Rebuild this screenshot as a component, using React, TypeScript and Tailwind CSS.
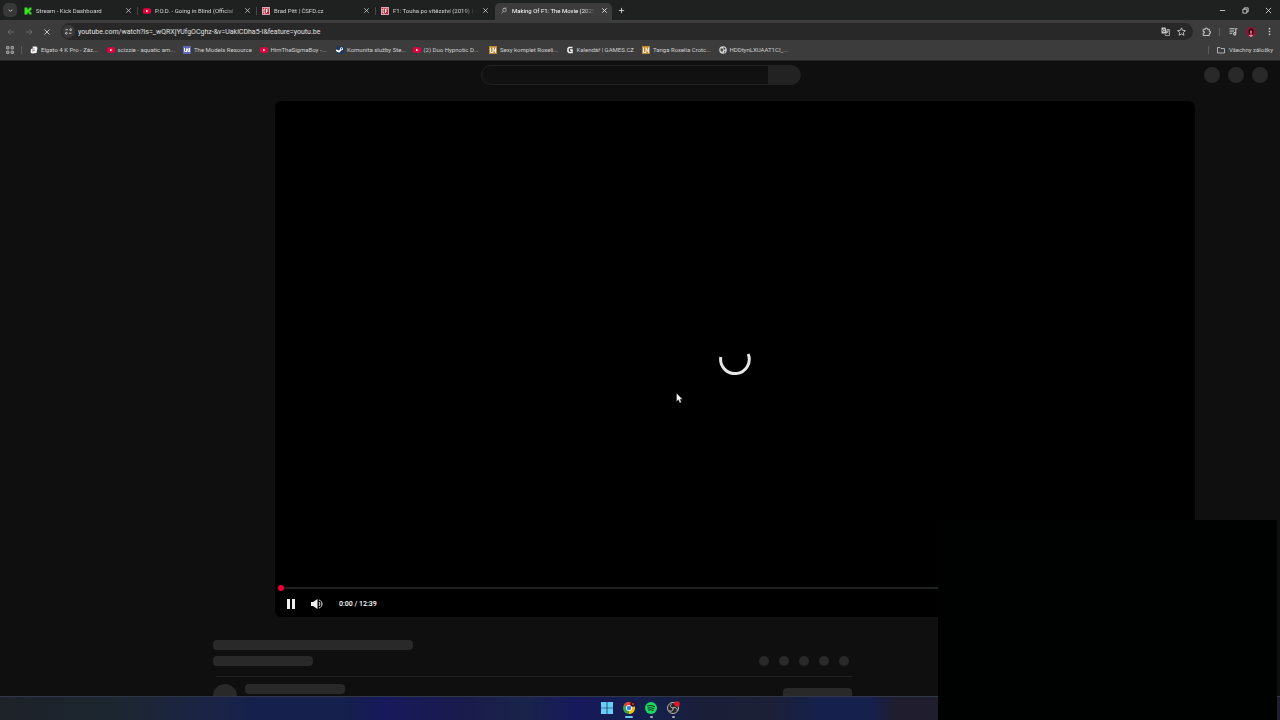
import React from "react";

const tabs = [
  { icon: "kick", title: "Stream - Kick Dashboard" },
  { icon: "yt", title: "P.O.D. - Going in Blind (Official" },
  { icon: "csfd", title: "Brad Pitt | ČSFD.cz" },
  { icon: "csfd", title: "F1: Touha po vítězství (2019) | Č" },
  { icon: "load", title: "Making Of F1: The Movie (2025" },
];

const bookmarks = [
  { icon: "elgato", title: "Elgato 4 K Pro - Záz..." },
  { icon: "yt", title: "scizzie - aquatic am..." },
  { icon: "models", title: "The Models Resource" },
  { icon: "yt", title: "HimTheSigmaBoy -..." },
  { icon: "steam", title: "Komunita služby Ste..." },
  { icon: "yt", title: "(2) Duo Hypnotic D..." },
  { icon: "ln", title: "Sexy komplet Roxeli..." },
  { icon: "games", title: "Kalendář | GAMES.CZ" },
  { icon: "ln", title: "Tanga Roxelia Crotc..." },
  { icon: "globe", title: "HDDtynLXUAAT1CI_..." },
];

function SiteIcon({ name }: { name: string }) {
  return (
    <svg viewBox="0 0 16 16" className="size-2 shrink-0" aria-hidden="true">
      {name === "kick" && <path fill="#35e61c" d="M1 1h6v4h2V3h2V1h4v5h-2v2h-2v1h2v2h2v4h-4v-2H9v-2H7v4H1z" />}
      {name === "yt" && (
        <>
          <rect y="2.5" width="16" height="11" rx="3" fill="#e5003c" />
          <path fill="#fff" d="M6.3 5.5v5L10.8 8z" />
        </>
      )}
      {name === "csfd" && (
        <>
          <rect width="16" height="16" rx="2" fill="#e9d5d8" />
          <rect x="1.5" y="1.5" width="13" height="13" rx="1" fill="#ba2435" />
          <path fill="none" stroke="#fff" strokeWidth="1.8" d="M7 4H4v8h3M9 12V4h4M9 8h3" />
        </>
      )}
      {name === "load" && (
        <g fill="none" stroke="#b8b8b8" strokeWidth="1.5">
          <circle cx="9" cy="6" r="3.5" />
          <path d="M6.5 8.5 3 13M6 3l7-1" />
        </g>
      )}
      {name === "elgato" && (
        <>
          <path fill="#f2f2f2" d="M5 1h8l2 3-2 10-9 1-3-2 1-7 4-1z" />
          <path fill="none" stroke="#555" strokeWidth="1" d="M6 12c-2-4 1-8 4-6M6 9h4" />
        </>
      )}
      {name === "models" && (
        <>
          <rect width="16" height="16" fill="#6067b5" />
          <path fill="none" stroke="#fff" strokeWidth="2" d="M3 4v7h4V5m0 6 3-6v6h3V4" />
        </>
      )}
      {name === "steam" && (
        <>
          <circle cx="8" cy="8" r="8" fill="#17395f" />
          <path fill="none" stroke="#fff" strokeWidth="3.4" strokeLinecap="round" d="m1.5 9 4.5 2.2 5-5" />
          <circle cx="11" cy="5.5" r="3" fill="#fff" />
          <circle cx="11" cy="5.5" r="1.3" fill="#17395f" />
        </>
      )}
      {name === "ln" && (
        <>
          <rect width="16" height="16" fill="#bd8736" />
          <path fill="none" stroke="#fff" strokeWidth="1.7" d="M3 3v10h4v-2M8 13V3l5 10V3" />
        </>
      )}
      {name === "games" && <path fill="none" stroke="#f4f4f4" strokeWidth="3" d="M13 3H6L4 5v6l2 2h6V8H8" />}
      {name === "globe" && (
        <>
          <circle cx="8" cy="8" r="7.5" fill="#d5d5d5" />
          <path fill="#444" d="M3 5h4l2 3-2 2v3L3 9zM9 2l4 3-1 3-3-2zM10 10l3 1-3 3z" />
        </>
      )}
    </svg>
  );
}

function Line({ d, className = "size-2", w = 1.5 }: { d: string; className?: string; w?: number }) {
  return (
    <svg viewBox="0 0 16 16" className={className + " shrink-0"} fill="none" stroke="currentColor" strokeWidth={w} aria-hidden="true">
      <path d={d} />
    </svg>
  );
}

const CROSS = "M3 3l10 10M13 3 3 13";

function TabStrip() {
  return (
    <header className="flex h-5 items-center bg-[#1f2120] text-[#d6d6d6]">
      <button aria-label="Search tabs" className="ml-[3px] flex size-[14px] items-center justify-center rounded-[5px] bg-[#383838]">
        <Line d="m4 6 4 4 4-4" className="size-[7px]" w={2} />
      </button>
      <nav className="ml-[2px] flex h-full items-end" aria-label="Tabs">
        {tabs.map((t, i) => (
          <div
            key={t.title}
            className={
              i === 4
                ? "flex h-[17px] w-[117px] items-center rounded-t-[5px] bg-[#3c3c3c] pr-1 pb-[2px] pl-[5px] text-white"
                : "flex h-[17px] w-[119px] items-center pb-[2px] pl-[5px]"
            }
          >
            <SiteIcon name={t.icon} />
            <a href="#tab" className="ml-1 min-w-0 flex-1 whitespace-nowrap [mask-image:linear-gradient(to_right,black_85%,transparent)]">
              {t.title}
            </a>
            <button aria-label="Close tab" className="ml-[6px]">
              <Line d={CROSS} className="size-[7px]" w={1.8} />
            </button>
            {i < 4 && <span className={i < 3 ? "ml-[5px] h-2 w-px bg-[#484848]" : "ml-[6px]"} />}
          </div>
        ))}
      </nav>
      <button aria-label="New tab" className="ml-[6px]">
        <Line d="M8 2v12M2 8h12" className="size-[7px]" w={2} />
      </button>
      <div className="mr-2 ml-auto flex items-center gap-4">
        <button aria-label="Minimize"><Line d="M2 8h12" className="size-[7px]" w={2} /></button>
        <button aria-label="Restore"><Line d="M2 5h9v9H2zM5 5V2h9v9h-3" className="size-[7px]" w={2} /></button>
        <button aria-label="Close"><Line d="M2 2l12 12M14 2 2 14" className="size-[7px]" w={2} /></button>
      </div>
    </header>
  );
}

function Toolbar() {
  return (
    <div className="flex h-5 items-center bg-[#3c3c3c] pt-[3px] text-[#d0d0d0]">
      <div className="ml-[7px] flex w-[54px] items-center gap-[10px]">
        <button aria-label="Back" className="text-[#777]"><Line d="M14 8H2m5-5L2 8l5 5" /></button>
        <button aria-label="Forward" className="text-[#777]"><Line d="M2 8h12M9 3l5 5-5 5" /></button>
        <button aria-label="Stop"><Line d={CROSS} w={1.8} /></button>
      </div>
      <div className="flex h-[17px] min-w-0 flex-1 items-center rounded-full bg-[#282828]">
        <span className="ml-px flex size-[13px] items-center justify-center rounded-full bg-[#3a3a3a]">
          <Line d="M1 4h6M11 4a2 2 0 1 0 4 0 2 2 0 1 0-4 0M9 12h6M1 12a2 2 0 1 0 4 0 2 2 0 1 0-4 0" className="size-[7px]" w={2} />
        </span>
        <input
          aria-label="Address"
          defaultValue="youtube.com/watch?is=_wQRXjYUfgOCghz-&v=UaklCDha5-I&feature=youtu.be"
          className="ml-[3px] min-w-0 flex-1 bg-transparent text-[7px] text-[#e0e0e0] outline-none"
        />
        <button aria-label="Translate" className="mr-[7px]">
          <svg viewBox="0 0 18 18" className="size-[9px]" aria-hidden="true">
            <path fill="#ccc" d="M1 1h8l3 12H1z" />
            <path fill="none" stroke="#ccc" strokeWidth="1.4" d="M11 5h6v12H9l-1-3M11 8h5M13.500 7c0 3-1 4-2 5m0-3 4 4" />
            <path fill="none" stroke="#333" strokeWidth="1.4" d="M8 5.500C5 3 3 5 3 7s3 4 5 1H5.500" />
          </svg>
        </button>
        <button aria-label="Bookmark" className="mr-[7px]">
          <Line d="m8 1.500 2 4.500 5 .5-3.700 3.300 1 4.900L8 12.200l-4.300 2.500 1-4.900L1 6.500 6 6z" className="size-[9px]" />
        </button>
      </div>
      <div className="mr-[6px] ml-[9px] flex items-center">
        <button aria-label="Extensions"><Line d="M2 4h4V2h3v2h4v4h2v3h-2v4H2v-4h2V8H2z" className="size-[9px]" w={1.7} /></button>
        <span className="ml-2 h-2 w-px bg-[#606060]" />
        <button aria-label="Media" className="ml-[9px]"><Line d="M1 3h9M1 7h8M1 11h5M12 12V3h3M8.500 12a1.800 1.800 0 1 0 3.500 0 1.800 1.800 0 1 0-3.500 0" className="size-[9px]" w={1.8} /></button>
        <button aria-label="Profile" className="ml-2">
          <svg viewBox="0 0 20 20" className="size-[10px]" aria-hidden="true">
            <circle cx="10" cy="10" r="10" fill="#8d1536" />
            <path fill="#24070e" d="M5 10c-1-9 11-10 10 0l-2 5H7z" />
            <path fill="#c9687c" d="M8 7h4v5l-2 3-2-3z" />
            <path fill="#e98b9d" d="m5 17 5-2 5 2-5 3z" />
          </svg>
        </button>
        <button aria-label="Menu" className="ml-[9px]">
          <svg viewBox="0 0 16 16" className="size-[9px]" fill="#d0d0d0" aria-hidden="true">
            <circle cx="8" cy="3" r="1.500" /><circle cx="8" cy="8" r="1.500" /><circle cx="8" cy="13" r="1.500" />
          </svg>
        </button>
      </div>
    </div>
  );
}

function Bookmarks() {
  return (
    <nav aria-label="Bookmarks" className="flex h-[21px] items-center border-b border-[#242424] bg-[#3c3c3c] text-[#d0d0d0]">
      <button aria-label="Apps" className="ml-[6px]">
        <svg viewBox="0 0 16 16" className="size-2" fill="#777" stroke="#aaa" strokeWidth="1.500" aria-hidden="true">
          <path d="M1 1h5v5H1zM10 1h5v5h-5zM1 10h5v5H1zM10 10h5v5h-5z" />
        </svg>
      </button>
      <span className="ml-[7px] h-2 w-px bg-[#5c5c5c]" />
      <div className="ml-2 grid w-[765px] grid-cols-10">
        {bookmarks.map((b) => (
          <a key={b.title} href="#bookmark" className="flex items-center gap-[3px] whitespace-nowrap">
            <SiteIcon name={b.icon} />
            {b.title}
          </a>
        ))}
      </div>
      <span className="ml-auto h-2 w-px bg-[#5c5c5c]" />
      <a href="#all" className="mr-[7px] ml-2 flex items-center gap-1 whitespace-nowrap">
        <Line d="M1 3h5l2 2h7v9H1z" />
        Všechny záložky
      </a>
    </nav>
  );
}

function Player() {
  return (
    <section aria-label="Video player" className="relative mr-[85px] ml-[275px] flex h-[516px] flex-col justify-end rounded-md bg-black px-[6px] text-white">
      <div className="absolute inset-0 flex items-center justify-center">
        <svg viewBox="0 0 32 32" className="size-8" fill="none" stroke="#e6e6e6" strokeWidth="3" role="img" aria-label="Loading">
          <path d="M1.800 14A14.300 14.300 0 1 0 29.200 11" />
        </svg>
      </div>
      <div className="relative h-[2px] bg-[#202222]">
        <span className="absolute -top-[2px] -left-[3px] size-[6px] rounded-full bg-[#f00038]" />
      </div>
      <div className="relative flex h-7 items-center pt-[2px]">
        <button aria-label="Pause" className="ml-[5px]">
          <svg viewBox="0 0 10 10" className="size-[10px]" fill="#f1f1f1"><path d="M1 0h3v10H1zM6 0h3v10H6z" /></svg>
        </button>
        <button aria-label="Mute" className="ml-[15px]">
          <svg viewBox="0 0 24 20" className="h-[10px] w-3" aria-hidden="true">
            <path fill="#f1f1f1" d="M0 6h4l9-6v20l-9-6H0z" />
            <path fill="none" stroke="#f1f1f1" strokeWidth="2" d="M15.500 6c3 2 3 6 0 8M16 2c8 2 8 14 0 16" />
          </svg>
        </button>
        <span className="ml-4 font-['Roboto',sans-serif] text-[7px] font-medium">0:00 / 12:39</span>
      </div>
    </section>
  );
}

function Placeholder() {
  return (
    <section aria-label="Loading details" className="mt-[23px] ml-[213px] w-[639px]">
      <div className="h-[10px] w-[200px] rounded-[4px] bg-[#292929]" />
      <div className="mt-[6px] flex items-center justify-between">
        <div className="h-[10px] w-[100px] rounded-[4px] bg-[#292929]" />
        <div className="mr-[3px] flex gap-[10px]">
          {[0, 1, 2, 3, 4].map((n) => <span key={n} className="size-[10px] rounded-full bg-[#292929]" />)}
        </div>
      </div>
      <div className="mt-[10px] ml-[3px] h-px bg-[#202020]" />
      <div className="flex items-start pt-[7px]">
        <span className="size-6 rounded-full bg-[#292929]" />
        <span className="ml-2 h-[10px] w-[100px] rounded-[4px] bg-[#292929]" />
        <span className="mt-1 ml-auto h-[18px] w-[69px] rounded-[4px] bg-[#292929]" />
      </div>
    </section>
  );
}

function Taskbar() {
  return (
    <footer className="flex h-6 shrink-0 justify-center gap-[10px] border-t border-[#303848] bg-[linear-gradient(90deg,#1e2229_0,#1c2630_9%,#1b2448_17%,#15204c_20%,#15204c_27%,#17195c_30%,#1a1b4c_36%,#19244a_41%,#17195c_45%,#15204c_51%,#1a1f38_55%,#1c2036_60%,#15204c_64%,#15204c_68%,#201e2e_70%,#201e2e)]">
      <button aria-label="Start" className="flex w-3 flex-col items-center pt-[5px]">
        <svg viewBox="0 0 24 24" className="size-3" fill="#65cff5"><path d="M0 0h11.300v11.300H0zM12.700 0H24v11.300H12.700zM0 12.700h11.300V24H0zM12.700 12.700H24V24H12.700z" /></svg>
      </button>
      <button aria-label="Chrome" className="flex w-3 flex-col items-center pt-[5px]">
        <svg viewBox="0 0 24 24" className="size-3 overflow-visible">
          <circle cx="12" cy="12" r="12" fill="#34a853" />
          <path fill="#ea4335" d="M12 12 1.600 6A12 12 0 0 1 22.400 6z" />
          <path fill="#fbbc05" d="M12 12 22.400 6A12 12 0 0 1 12 24z" />
          <circle cx="12" cy="12" r="6" fill="#fff" /><circle cx="12" cy="12" r="4.500" fill="#3982ed" />
          <circle cx="20" cy="4" r="5.500" fill="#3b0d18" /><circle cx="20" cy="4" r="2" fill="#ab5060" />
        </svg>
        <span className="mt-[2px] h-[2px] w-2 rounded-full bg-[#6bc5ed]" />
      </button>
      <button aria-label="Spotify" className="flex w-3 flex-col items-center pt-[5px]">
        <svg viewBox="0 0 24 24" className="size-3" fill="none" stroke="#113c22" strokeWidth="2.200" strokeLinecap="round">
          <circle cx="12" cy="12" r="12" fill="#1ed760" stroke="none" />
          <path d="M5 8c5-1.500 10-1 14 1.300M6 12.200c4-1.200 8-.7 11.500 1.200M7 16c3-.8 6.500-.5 9 1" />
        </svg>
        <span className="mt-[2px] h-[2px] w-[3px] rounded-full bg-[#a4a8b8]" />
      </button>
      <button aria-label="OBS" className="flex w-3 flex-col items-center pt-[5px]">
        <svg viewBox="0 0 24 24" className="size-3 overflow-visible">
          <circle cx="12" cy="12" r="11" fill="#24242a" stroke="#c6c6c6" strokeWidth="1.800" />
          <path fill="none" stroke="#c6c6c6" strokeWidth="2" d="M12 12c-6-1-6-6-3-8M12 12c6-3 9 2 8 5M12 12c1 6-4 8-8 5" />
          <circle cx="20" cy="4" r="5.500" fill="#e61520" />
        </svg>
        <span className="mt-[2px] h-[2px] w-[3px] rounded-full bg-[#a4a8b8]" />
      </button>
    </footer>
  );
}

export default function App() {
  return (
    <div className="relative flex h-screen flex-col overflow-hidden bg-[#0f0f0f] font-['Roboto',sans-serif] text-[6px] leading-[10px]">
      <TabStrip />
      <Toolbar />
      <Bookmarks />
      <main className="min-h-0 flex-1 overflow-hidden">
        <div className="grid h-10 grid-cols-[1fr_322px_1fr] pt-1">
          <span />
          <form className="ml-[2px] flex h-5" aria-label="Search">
            <input aria-label="Search" className="min-w-0 flex-1 rounded-l-full border border-[#222] bg-[#111] px-3 outline-none" />
            <button type="button" aria-label="Submit search" className="w-8 rounded-r-full bg-[#222]" />
          </form>
          <div className="mr-3 flex justify-end gap-2 pt-[2px]">
            {[0, 1, 2].map((n) => <span key={n} className="size-4 rounded-full bg-[#292929]" />)}
          </div>
        </div>
        <Player />
        <Placeholder />
      </main>
      <Taskbar />
      <div className="absolute right-[3px] bottom-0 h-[200px] w-[339px] bg-[#000101]" />
      <svg viewBox="0 0 12 18" className="absolute top-[393px] left-[676px] h-[11px] w-[7px]" aria-hidden="true">
        <path fill="#fff" stroke="#222" strokeWidth=".6" d="M1 0v14l3.300-3 2.200 5.500 2.600-1-2.200-5.300H11z" />
      </svg>
    </div>
  );
}
